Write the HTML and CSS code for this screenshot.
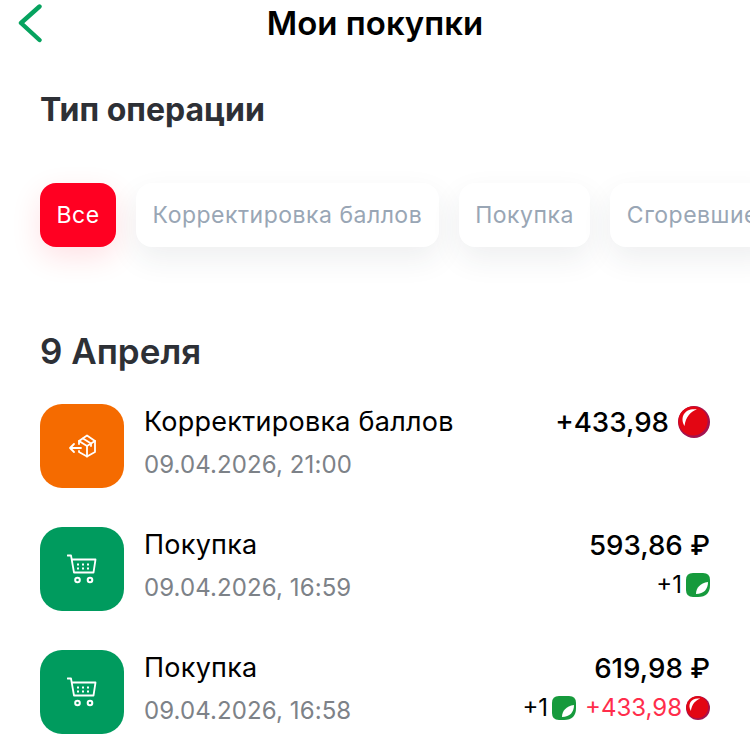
FILE: index.html
```html
<!DOCTYPE html>
<html lang="ru">
<head>
    <meta charset="UTF-8">
    <meta name="viewport" content="width=device-width, initial-scale=1.0">
    <title>Мои покупки</title>
    <link rel="stylesheet" href="styles.css">
</head>
<body>
    <svg class="defs" width="0" height="0">
        <defs>
            <symbol id="ball" viewBox="0 0 32 32">
                <circle cx="16" cy="16" r="16" fill="#a3134f"/>
                <circle cx="15" cy="15" r="14.6" fill="#e30613"/>
                <path d="M6.5 20C1 10 8 1.5 19 3.5C13 5 7.5 11 6.5 20Z" fill="#fff"/>
            </symbol>
            <symbol id="leaf" viewBox="0 0 24 24">
                <path d="M7 0H17Q24 0 24 7V12Q24 24 12 24H7Q0 24 0 17V7Q0 0 7 0Z" fill="#169a3c"/>
                <path d="M10 21C10 15 14 10 22 9C22 16 18 21 10 21Z" fill="#fff"/>
            </symbol>
            <symbol id="cart" viewBox="0 0 30 30">
                <path d="M0.5 1.5H4L7 18.5H26.5L28.5 5.5H5" fill="none" stroke="#fff" stroke-width="1.8" stroke-linecap="round" stroke-linejoin="round"/>
                <circle cx="10.5" cy="26" r="2.3" fill="none" stroke="#fff" stroke-width="2"/>
                <circle cx="23" cy="26" r="2.3" fill="none" stroke="#fff" stroke-width="2"/>
                <g fill="#fff">
                    <rect x="10" y="9.5" width="2" height="2"/><rect x="15" y="9.5" width="2" height="2"/><rect x="20" y="9.5" width="2" height="2"/>
                    <rect x="10" y="13.5" width="2" height="2"/><rect x="15" y="13.5" width="2" height="2"/><rect x="20" y="13.5" width="2" height="2"/>
                </g>
            </symbol>
        </defs>
    </svg>

    <header class="topbar">
        <a class="back" href="#">
            <svg width="26" height="40" viewBox="0 0 26 40"><path d="M22.5 3.5L4 20L22.5 37" fill="none" stroke="#06a35f" stroke-width="4.4" stroke-linecap="round" stroke-linejoin="round"/></svg>
        </a>
        <h1 class="page-title">Мои покупки</h1>
    </header>

    <h2 class="section-title">Тип операции</h2>

    <div class="chips">
        <div class="chip chip-active">Все</div>
        <div class="chip">Корректировка баллов</div>
        <div class="chip">Покупка</div>
        <div class="chip">Сгоревшие</div>
    </div>

    <h2 class="date-title">9 Апреля</h2>

    <ul class="operations">
        <li class="operation">
            <div class="op-icon op-icon-orange">
                <svg width="30" height="24" viewBox="0 0 30 24" fill="none" stroke="#fff" stroke-width="1.8" stroke-linejoin="round" stroke-linecap="round">
                    <path d="M12 10V7L20 1.5L28 7V18L20 22.5L12 18V17"/>
                    <path d="M12 7L20 12L28 7M20 12V22.5"/>
                    <path d="M16 4.5L24 9.5V12"/>
                    <path d="M3 14H14M7 10L3 14L7 18"/>
                </svg>
            </div>
            <div class="op-main">
                <div class="op-name">Корректировка баллов</div>
                <div class="op-date">09.04.2026, 21:00</div>
            </div>
            <div class="op-side">
                <div class="op-sum">+433,98 <svg class="ball-big"><use href="#ball"/></svg></div>
            </div>
        </li>
        <li class="operation">
            <div class="op-icon op-icon-green">
                <svg width="30" height="30"><use href="#cart"/></svg>
            </div>
            <div class="op-main">
                <div class="op-name">Покупка</div>
                <div class="op-date">09.04.2026, 16:59</div>
            </div>
            <div class="op-side">
                <div class="op-sum">593,86 ₽</div>
                <div class="op-bonus">+1 <svg class="leaf"><use href="#leaf"/></svg></div>
            </div>
        </li>
        <li class="operation">
            <div class="op-icon op-icon-green">
                <svg width="30" height="30"><use href="#cart"/></svg>
            </div>
            <div class="op-main">
                <div class="op-name">Покупка</div>
                <div class="op-date">09.04.2026, 16:58</div>
            </div>
            <div class="op-side">
                <div class="op-sum">619,98 ₽</div>
                <div class="op-bonus">+1 <svg class="leaf"><use href="#leaf"/></svg> <span class="op-points">+433,98</span> <svg class="ball-small"><use href="#ball"/></svg></div>
            </div>
        </li>
    </ul>
</body>
</html>
```

FILE: styles.css
```css
html, body {
    height: 100%;
}
body {
    margin: 0;
    overflow: hidden;
    background: #fff;
    font-family: Inter, "Liberation Sans", sans-serif;
    color: #000;
}
.defs {
    position: absolute;
}
.topbar {
    height: 48px;
    display: flex;
    align-items: center;
    justify-content: center;
    position: relative;
}
.back {
    position: absolute;
    left: 17px;
    top: 3px;
}
.page-title {
    margin: 0;
    font-size: 33px;
    line-height: 46px;
    padding-bottom: 2px;
    font-weight: 600;
}
.section-title {
    margin: 42px 0 0 40px;
    font-size: 32px;
    line-height: 40px;
    font-weight: 700;
    color: #2d3036;
}
.chips {
    display: flex;
    gap: 20px;
    padding: 53px 0 82px 40px;
    overflow: hidden;
}
.chip {
    flex: none;
    height: 64px;
    padding: 0 16.5px;
    display: flex;
    align-items: center;
    background: #fff;
    border-radius: 16px;
    font-size: 23px;
    letter-spacing: 0.5px;
    color: #99a6b5;
    box-shadow: 0 12px 30px rgba(40, 50, 70, 0.08);
}
.chip-active {
    background: #ff0022;
    color: #fff;
    box-shadow: 0 10px 30px rgba(255, 0, 34, 0.12);
}
.date-title {
    margin: 0 0 0 40px;
    font-size: 35px;
    line-height: 44px;
    font-weight: 600;
    color: #2d3036;
}
.operations {
    list-style: none;
    margin: 31px 0 0;
    padding: 0 40px;
    display: flex;
    flex-direction: column;
    gap: 39px;
}
.operation {
    display: flex;
    height: 84px;
}
.op-icon {
    flex: none;
    width: 84px;
    height: 84px;
    border-radius: 22px;
    display: flex;
    align-items: center;
    justify-content: center;
}
.op-icon-orange {
    background: #f56b00;
}
.op-icon-green {
    background: #009b5e;
}
.op-main {
    flex: 1;
    margin-left: 20px;
}
.op-name {
    margin-top: 2px;
    font-size: 27px;
    line-height: 32px;
    letter-spacing: 0.25px;
}
.op-date {
    margin-top: 11px;
    font-size: 24px;
    line-height: 32px;
    letter-spacing: 0.1px;
    color: #7d8288;
}
.op-side {
    display: flex;
    flex-direction: column;
    align-items: flex-end;
}
.op-sum {
    display: flex;
    align-items: center;
    gap: 9px;
    margin-top: 2px;
    font-size: 27.7px;
    line-height: 32px;
    font-weight: 500;
}
.op-bonus {
    display: flex;
    align-items: center;
    gap: 4px;
    margin-top: 8px;
    font-size: 24px;
    line-height: 32px;
}
.op-points {
    margin-left: 5px;
    color: #ff2d4b;
}
.ball-big {
    width: 32px;
    height: 32px;
}
.ball-small {
    width: 24px;
    height: 24px;
}
.leaf {
    width: 24px;
    height: 24px;
}
```
